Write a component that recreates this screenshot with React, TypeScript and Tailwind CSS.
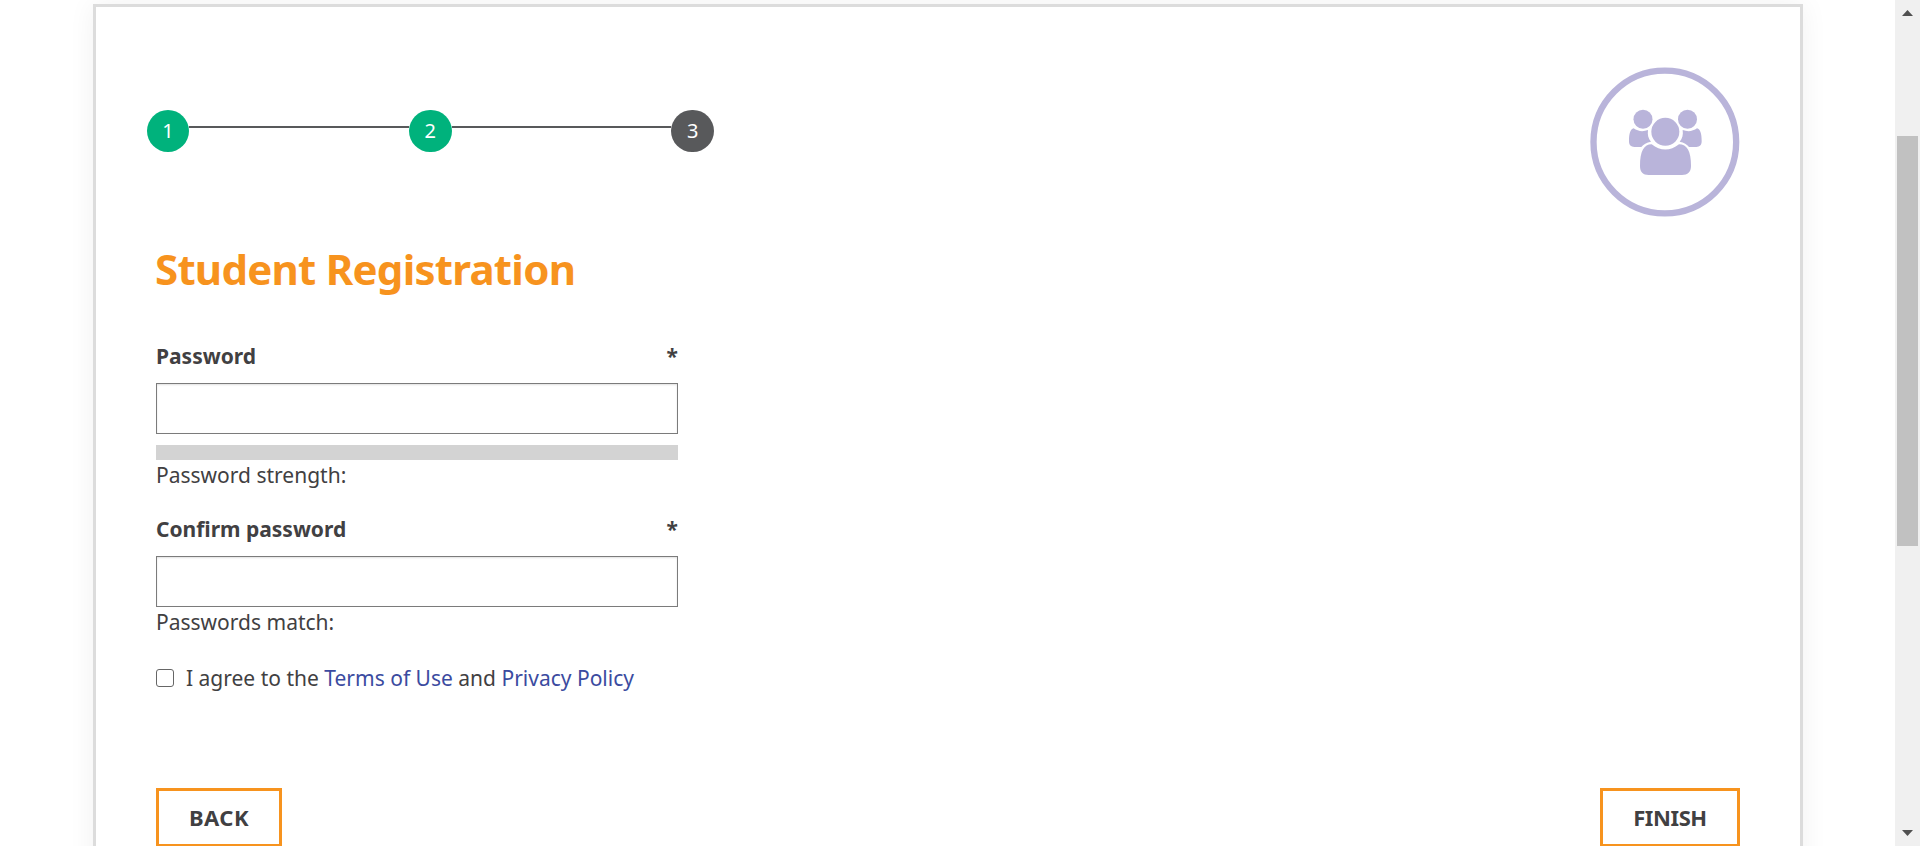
import React from "react";

function Step({ n, done }: { n: number; done: boolean }) {
  return (
    <div
      className={`flex h-[42px] w-[42.5px] shrink-0 items-center justify-center rounded-full pb-px text-[20px] text-white ${
        done ? "bg-[#00b27c]" : "bg-[#58595b]"
      }`}
    >
      {n}
    </div>
  );
}

function Connector() {
  return <div className="mt-4 h-[2px] flex-1 bg-[#58595b]" />;
}

function PeopleIcon() {
  return (
    <svg viewBox="60 51 450 450" className="h-[150px] w-[150px]" fill="#b9b4da">
      <circle cx="284.500" cy="276" r="214" fill="none" stroke="#b9b4da" strokeWidth="19" />
      <circle cx="219" cy="208" r="28.500" />
      <circle cx="352.500" cy="208" r="28.500" />
      <circle cx="286" cy="245.500" r="42" />
      <path d="M191 235C181 237 177 251 177 274C177 285 183 291 193 291H214C220 283 230 277 243 275C235 266 232 255 234 240C219 246 203 244 191 235Z" />
      <path d="M381 235C391 237 395 251 395 274C395 285 389 291 379 291H357C351 283 342 277 329 275C337 266 340 255 338 240C353 246 369 244 381 235Z" />
      <path d="M245 283C271 304 301 304 327 283C351 283 363 304 363 348C363 366 353 375 336 375H236C219 375 210 366 210 348C210 304 222 283 245 283Z" />
    </svg>
  );
}

function Label({ children }: { children: React.ReactNode }) {
  return (
    <label className="flex h-7 items-center justify-between font-bold">
      <span>{children}</span>
      <span>*</span>
    </label>
  );
}

function PasswordInput() {
  return (
    <input
      type="password"
      className="block h-[51px] w-full border border-[#7b7b7b] bg-white px-3 shadow-[inset_0_1px_2px_rgba(0,0,0,0.12)] outline-none"
    />
  );
}

function ActionButton({ children, className }: { children: React.ReactNode; className: string }) {
  return (
    <button
      className={`flex h-[59px] items-center justify-center border-[3px] border-[#f7931e] pb-[2px] text-[22px] font-bold ${className}`}
    >
      {children}
    </button>
  );
}

function Scrollbar() {
  return (
    <div className="flex h-full w-[25px] shrink-0 flex-col items-center bg-[#f0f0f0]">
      <svg viewBox="0 0 11 6" className="mt-[10px] h-[6px] w-[11px]" fill="#505050">
        <path d="M5.500 0L11 6H0Z" />
      </svg>
      <div className="mt-[120px] h-[410px] w-[21px] bg-[#c1c1c1]" />
      <svg viewBox="0 0 11 6" className="mt-auto mb-[10px] h-[6px] w-[11px]" fill="#505050">
        <path d="M0 0H11L5.500 6Z" />
      </svg>
    </div>
  );
}

export default function App() {
  return (
    <div className="flex h-[846px] overflow-hidden bg-white font-['Noto_Sans',sans-serif] text-[21px] leading-7 text-[#414042]">
      <div className="flex-1 overflow-hidden pt-1 pl-[93px]">
        <main className="h-[950px] w-[1710px] border-[3px] border-[#dcdcdc] bg-white pr-[60px] pl-[60px] shadow-[0_0_26px_rgba(0,0,0,0.06)]">
          <header className="flex h-[210px] items-start justify-between pt-[60px]">
            <div className="mt-[43px] -ml-[9.300px] flex w-[567.200px] items-start">
              <Step n={1} done />
              <Connector />
              <Step n={2} done />
              <Connector />
              <Step n={3} done={false} />
            </div>
            <PeopleIcon />
          </header>
          <h1 className="mt-[22px] -ml-px h-[60px] text-[42px] leading-[60px] font-bold tracking-[-0.750px] whitespace-nowrap text-[#f7931e]">
            Student Registration
          </h1>
          <form className="mt-[43px] w-[522px]">
            <Label>Password</Label>
            <div className="mt-[13px]">
              <PasswordInput />
            </div>
            <div className="mt-[11px] h-[15px] bg-[#d3d3d3]" />
            <p className="mt-[1px]">Password strength:</p>
            <div className="mt-[26px]">
              <Label>Confirm password</Label>
            </div>
            <div className="mt-[13px]">
              <PasswordInput />
            </div>
            <p className="mt-[1px]">Passwords match:</p>
            <div className="mt-[28px] flex items-center">
              <input
                type="checkbox"
                className="h-[18px] w-[18px] appearance-none rounded-[3px] border border-[#666666] bg-white"
              />
              <p className="ml-[12px] whitespace-nowrap">
                I agree to the <a className="text-[#3b4ba0]">Terms of Use</a> and{" "}
                <a className="text-[#3b4ba0]">Privacy Policy</a>
              </p>
            </div>
          </form>
          <div className="mt-[96px] flex justify-between">
            <ActionButton className="w-[126px] tracking-[0.500px]">BACK</ActionButton>
            <ActionButton className="w-[140px] tracking-[-0.400px]">FINISH</ActionButton>
          </div>
        </main>
      </div>
      <Scrollbar />
    </div>
  );
}
